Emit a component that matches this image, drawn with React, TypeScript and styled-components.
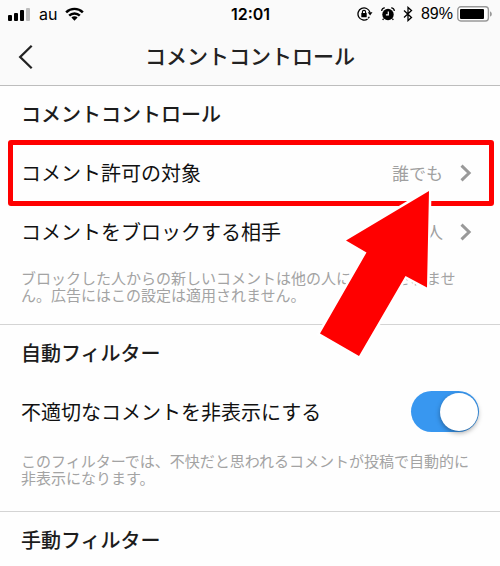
import React, { useId, useState } from "react";
import styled, { createGlobalStyle } from "styled-components";

const GlobalStyle = createGlobalStyle`
  * { box-sizing: border-box; }
  body {
    margin: 0;
    background: #fefefe;
    color: #111;
    font-family: "Noto Sans CJK JP", sans-serif;
    font-weight: 400;
  }
`;

const TopArea = styled.header`
  background: #fafafa;
  border-bottom: 1px solid #bdbdbd;
`;

const StatusBar = styled.div`
  display: grid;
  grid-template-columns: 1fr auto 1fr;
  align-items: center;
  height: 28px;
  padding: 0 7px 0 8px;
  color: #000;
  font-family: Inter, sans-serif;
  font-size: 16px;
  line-height: 20px;
`;

const StatusGroup = styled.div<{ $end?: boolean }>`
  display: flex;
  align-items: center;
  justify-content: ${(p) => (p.$end ? "flex-end" : "flex-start")};
  gap: 8px;
`;

const Clock = styled.time`
  font-weight: 600;
`;

const Battery = styled.span`
  display: flex;
  align-items: center;
  gap: 4px;
`;

const Percent = styled.span`
  font-family: "Liberation Sans", sans-serif;
`;

const Icon = styled.svg`
  display: block;
  flex: none;
`;

const NavBar = styled.div`
  display: grid;
  grid-template-columns: 60px 1fr 60px;
  align-items: center;
  height: 57px;
`;

const BackButton = styled.button`
  display: flex;
  align-items: center;
  height: 44px;
  padding: 0 0 0 18px;
  border: 0;
  background: none;
`;

const PageTitle = styled.h1`
  margin: 0;
  padding-bottom: 3px;
  color: #222;
  text-align: center;
  font-size: 21px;
  font-weight: 500;
  line-height: 28px;
`;

const Section = styled.section`
  & + & {
    border-top: 1px solid #d4d4d4;
  }
`;

const SectionTitle = styled.h2`
  margin: 0;
  padding: 16px 21px 0;
  color: #1c1c1c;
  font-size: 20px;
  font-weight: 500;
  line-height: 24px;
`;

const Rows = styled.div`
  margin-top: 17px;
`;

const RowFrame = styled.div`
  position: relative;
`;

const RowButton = styled.button`
  display: flex;
  align-items: center;
  width: 100%;
  height: 59px;
  padding: 0 28px 0 21px;
  border: 0;
  background: none;
  color: inherit;
  font: inherit;
  text-align: left;
`;

const SwitchRow = styled.div`
  display: flex;
  align-items: center;
  height: 59px;
  padding: 0 21px;
`;

const RowText = styled.span`
  flex: 1;
  font-size: 20px;
  line-height: 28px;
`;

const RowValue = styled.span`
  margin-right: 17px;
  color: #a0a0a0;
  font-size: 17px;
  line-height: 24px;
`;

const Help = styled.p<{ $roomy?: boolean }>`
  margin: 0;
  padding: ${(p) => (p.$roomy ? "11px 21px 25px" : "8px 21px 21px")};
  color: #a3a3a3;
  font-size: 15px;
  line-height: 17px;
`;

const Switch = styled.input`
  appearance: none;
  flex: none;
  display: flex;
  align-items: center;
  width: 68px;
  height: 41px;
  margin: 0;
  padding: 0 1px;
  border-radius: 21px;
  background: #d8d8d8;

  &::before {
    content: "";
    width: 38px;
    height: 38px;
    border-radius: 50%;
    background: #fff;
    box-shadow: 0 2px 5px rgba(0, 0, 0, 0.35);
  }

  &:checked {
    justify-content: flex-end;
    background: #3897f0;
  }
`;

const Highlight = styled.div`
  position: absolute;
  inset: -3px 6px -4px 8px;
  border: 5px solid #f00;
  border-radius: 3px;
  pointer-events: none;
`;

const Arrow = styled.svg`
  position: absolute;
  top: 37px;
  right: 60px;
  z-index: 1;
  pointer-events: none;
`;

const SignalIcon = () => (
  <Icon width="23" height="14" viewBox="0 0 23 14" aria-hidden>
    <rect x="0" y="8" width="4" height="6" rx="1" />
    <rect x="6" y="6" width="4" height="8" rx="1" />
    <rect x="12" y="3" width="4" height="11" rx="1" />
    <rect x="18" y="1" width="4" height="13" rx="1" fill="#bdbdbd" />
  </Icon>
);

const WifiIcon = () => (
  <Icon width="19" height="14" viewBox="0 0 20 14" aria-hidden>
    <g fill="none" stroke="#000" strokeWidth="2.6">
      <path d="M1.2 5.2a12.6 12.6 0 0 1 17.6 0" />
      <path d="M4.4 8.8a8 8 0 0 1 11.2 0" />
    </g>
    <path d="M6.7 10.8a4.7 4.7 0 0 1 6.6 0L10 14z" />
  </Icon>
);

const RotationLockIcon = () => (
  <Icon width="16" height="14" viewBox="0 0 16 14" aria-hidden>
    <path d="M12.9 5.2A6.1 6.1 0 1 0 10.6 12" fill="none" stroke="#000" strokeWidth="1.3" />
    <path d="M10.7 5.3h4.8L13.1 8.6z" />
    <path d="M12.3 9.8a6 6 0 0 1-1.2 1.5" fill="none" stroke="#000" strokeWidth="1.3" />
    <rect x="4.3" y="6.1" width="5.4" height="4.2" rx=".5" />
    <path d="M5.4 6.4V5a1.6 1.6 0 0 1 3.2 0v1.4" fill="none" stroke="#000" strokeWidth="1.1" />
  </Icon>
);

const AlarmIcon = () => (
  <Icon width="14" height="14" viewBox="0 0 14 14" aria-hidden>
    <circle cx="7" cy="7.5" r="5.7" />
    <path d="M.7 4A3 3 0 0 1 3.8.9M13.3 4A3 3 0 0 0 10.2.9" fill="none" stroke="#000" strokeWidth="1.3" />
    <path d="M2.6 11.6 1.7 13M11.4 11.6l.9 1.4" stroke="#000" strokeWidth="1.3" />
    <path d="M7.3 4.5v3.3H4.9" fill="none" stroke="#fff" strokeWidth="1.2" />
  </Icon>
);

const BluetoothIcon = () => (
  <Icon width="10" height="16" viewBox="0 0 10 16" aria-hidden>
    <path d="m1 4.5 7.5 7L5 14.6V1.4l3.5 3.1-7.5 7" fill="none" stroke="#000" strokeWidth="1.3" />
  </Icon>
);

const BatteryIcon = () => (
  <Icon width="36" height="16" viewBox="0 0 36 16" aria-hidden>
    <rect x=".8" y=".8" width="30.6" height="14.2" rx="3" fill="#fff" stroke="#999" strokeWidth="1.4" />
    <rect x="3" y="3" width="24" height="10" rx="1" />
    <path d="M33 5.4c2.4.6 2.4 4.5 0 5.1z" fill="#999" />
  </Icon>
);

const Chevron = () => (
  <Icon width="12" height="18" viewBox="0 0 12 18" aria-hidden>
    <path d="m1.5 1.7 7.6 7.3-7.6 7.3" fill="none" stroke="#999" strokeWidth="3" />
  </Icon>
);

type LinkRowProps = { label: string; value: string; children?: React.ReactNode };

const LinkRow = ({ label, value, children }: LinkRowProps) => (
  <RowFrame>
    <RowButton type="button">
      <RowText>{label}</RowText>
      <RowValue>{value}</RowValue>
      <Chevron />
    </RowButton>
    {children}
  </RowFrame>
);

export default function App() {
  const [hidden, setHidden] = useState(true);
  const switchId = useId();

  return (
    <>
      <GlobalStyle />
      <TopArea>
        <StatusBar>
          <StatusGroup>
            <SignalIcon />
            <span>au</span>
            <WifiIcon />
          </StatusGroup>
          <Clock>12:01</Clock>
          <StatusGroup $end>
            <RotationLockIcon />
            <AlarmIcon />
            <BluetoothIcon />
            <Battery>
              <Percent>89%</Percent>
              <BatteryIcon />
            </Battery>
          </StatusGroup>
        </StatusBar>
        <NavBar>
          <BackButton type="button" aria-label="戻る">
            <Icon width="16" height="26" viewBox="0 0 16 26" aria-hidden>
              <path d="M13.7 1.8 2.2 13l11.5 11.2" fill="none" stroke="#222" strokeWidth="2.3" />
            </Icon>
          </BackButton>
          <PageTitle>コメントコントロール</PageTitle>
        </NavBar>
      </TopArea>
      <main>
        <Section>
          <SectionTitle>コメントコントロール</SectionTitle>
          <Rows>
            <LinkRow label="コメント許可の対象" value="誰でも">
              <Highlight />
              <Arrow width="130" height="180" viewBox="310 180 130 180" aria-hidden>
                <path
                  d="M429 191 346 240.500 366.500 252.500 320 333.500 359 356 405.500 276 427 287.500z"
                  fill="#f00"
                  stroke="#fff"
                  strokeWidth="5"
                  paintOrder="stroke"
                />
              </Arrow>
            </LinkRow>
            <LinkRow label="コメントをブロックする相手" value="0人" />
          </Rows>
          <Help>
            ブロックした人からの新しいコメントは他の人には表示されません。広告にはこの設定は適用されません。
          </Help>
        </Section>
        <Section>
          <SectionTitle>自動フィルター</SectionTitle>
          <Rows>
            <SwitchRow>
              <RowText as="label" htmlFor={switchId}>
                不適切なコメントを非表示にする
              </RowText>
              <Switch
                id={switchId}
                type="checkbox"
                role="switch"
                checked={hidden}
                onChange={(e) => setHidden(e.target.checked)}
              />
            </SwitchRow>
          </Rows>
          <Help $roomy>
            このフィルターでは、不快だと思われるコメントが投稿で自動的に非表示になります。
          </Help>
        </Section>
        <Section>
          <SectionTitle>手動フィルター</SectionTitle>
        </Section>
      </main>
    </>
  );
}
